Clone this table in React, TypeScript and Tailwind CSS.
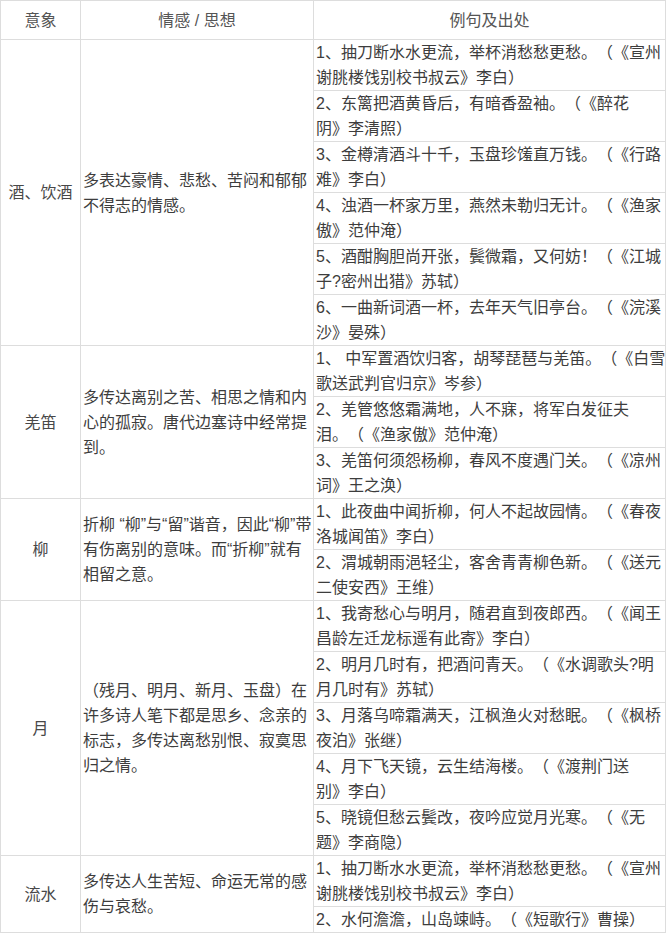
type Group = {
  name: string;
  idea: string[];
  examples: string[][];
};

const groups: Group[] = [
  {
    name: '酒、饮酒',
    idea: ['多表达豪情、悲愁、苦闷和郁郁', '不得志的情感。'],
    examples: [
      ['1、抽刀断水水更流，举杯消愁愁更愁。（《宣州', '谢朓楼饯别校书叔云》李白）'],
      ['2、东篱把酒黄昏后，有暗香盈袖。（《醉花', '阴》李清照）'],
      ['3、金樽清酒斗十千，玉盘珍馐直万钱。（《行路', '难》李白）'],
      ['4、浊酒一杯家万里，燕然未勒归无计。（《渔家', '傲》范仲淹）'],
      ['5、酒酣胸胆尚开张，鬓微霜，又何妨！（《江城', '子?密州出猎》苏轼）'],
      ['6、一曲新词酒一杯，去年天气旧亭台。（《浣溪', '沙》晏殊）'],
    ],
  },
  {
    name: '羌笛',
    idea: ['多传达离别之苦、相思之情和内', '心的孤寂。唐代边塞诗中经常提', '到。'],
    examples: [
      ['1、 中军置酒饮归客，胡琴琵琶与羌笛。（《白雪', '歌送武判官归京》岑参）'],
      ['2、羌管悠悠霜满地，人不寐，将军白发征夫', '泪。（《渔家傲》范仲淹）'],
      ['3、羌笛何须怨杨柳，春风不度遇门关。（《凉州', '词》王之涣）'],
    ],
  },
  {
    name: '柳',
    idea: ['折柳 “柳”与“留”谐音，因此“柳”带', '有伤离别的意味。而“折柳”就有', '相留之意。'],
    examples: [
      ['1、此夜曲中闻折柳，何人不起故园情。（《春夜', '洛城闻笛》李白）'],
      ['2、渭城朝雨浥轻尘，客舍青青柳色新。（《送元', '二使安西》王维）'],
    ],
  },
  {
    name: '月',
    idea: ['（残月、明月、新月、玉盘）在', '许多诗人笔下都是思乡、念亲的', '标志，多传达离愁别恨、寂寞思', '归之情。'],
    examples: [
      ['1、我寄愁心与明月，随君直到夜郎西。（《闻王', '昌龄左迁龙标遥有此寄》李白）'],
      ['2、明月几时有，把酒问青天。（《水调歌头?明', '月几时有》苏轼）'],
      ['3、月落乌啼霜满天，江枫渔火对愁眠。（《枫桥', '夜泊》张继）'],
      ['4、月下飞天镜，云生结海楼。（《渡荆门送', '别》李白）'],
      ['5、晓镜但愁云鬓改，夜吟应觉月光寒。（《无', '题》李商隐）'],
    ],
  },
  {
    name: '流水',
    idea: ['多传达人生苦短、命运无常的感', '伤与哀愁。'],
    examples: [
      ['1、抽刀断水水更流，举杯消愁愁更愁。（《宣州', '谢朓楼饯别校书叔云》李白）'],
      ['2、水何澹澹，山岛竦峙。（《短歌行》曹操）'],
    ],
  },
];

const Lines = ({ lines }: { lines: string[] }) => (
  <>
    {lines.map((l, i) => (
      <span key={i}>
        {i > 0 && <br />}
        {l}
      </span>
    ))}
  </>
);

const App = () => {
  return (
    <div
      className="w-[667px] bg-white text-[16px] leading-[25px] text-[#3d3d3d] [text-spacing-trim:space-all]"
      style={{ fontFamily: '"Liberation Sans", "Noto Sans CJK SC", sans-serif' }}
    >
      <table className="table-fixed border-collapse w-[665px]">
        <colgroup>
          <col className="w-[80px]" />
          <col className="w-[233px]" />
          <col className="w-[352px]" />
        </colgroup>
        <thead>
          <tr>
            <th className="border border-[#dddddd] pt-[7px] pb-[6px] font-normal text-center text-[#555]">意象</th>
            <th className="border border-[#dddddd] pt-[7px] pb-[6px] font-normal text-center text-[#555]">情感 / 思想</th>
            <th className="border border-[#dddddd] pt-[7px] pb-[6px] font-normal text-center text-[#555]">例句及出处</th>
          </tr>
        </thead>
        <tbody>
          {groups.map((g) =>
            g.examples.map((ex, i) => (
              <tr key={g.name + i}>
                {i === 0 && (
                  <>
                    <td rowSpan={g.examples.length} className="border border-[#dddddd] p-0 text-center align-middle text-[#484848] whitespace-nowrap">
                      {g.name}
                    </td>
                    <td rowSpan={g.examples.length} className="border border-[#dddddd] py-0 pl-[2px] pr-0 align-middle whitespace-nowrap">
                      <Lines lines={g.idea} />
                    </td>
                  </>
                )}
                <td className="border border-[#dddddd] py-0 pl-[2px] pr-0 align-top whitespace-nowrap overflow-hidden">
                  <Lines lines={ex} />
                </td>
              </tr>
            ))
          )}
        </tbody>
      </table>
    </div>
  );
};

export default App;
